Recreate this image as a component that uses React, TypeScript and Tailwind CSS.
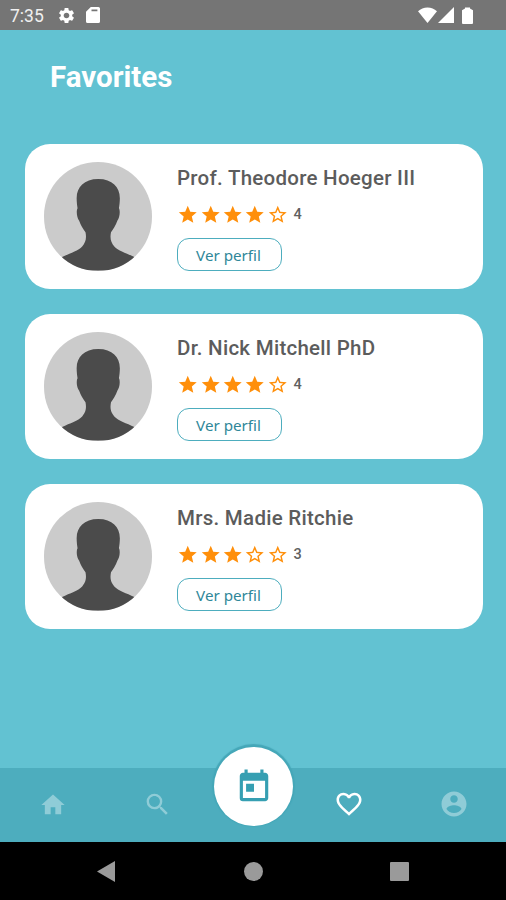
import {
  MdFavoriteBorder,
  MdHome,
  MdSearch,
  MdSettings,
  MdStar,
  MdStarBorder,
  MdToday,
} from "react-icons/md";

const doctors = [
  { name: "Prof. Theodore Hoeger III", stars: 4 },
  { name: "Dr. Nick Mitchell PhD", stars: 4 },
  { name: "Mrs. Madie Ritchie", stars: 3 },
];

function StatusBar() {
  return (
    <div className="flex h-[30px] items-center bg-[#757575] pr-[33px] pl-[10px] text-white">
      <span className="w-[47px] pt-[2px] text-[17.5px] leading-[30px] text-[#f0f0f0]">7:35</span>
      <MdSettings className="size-[19px]" />
      <svg viewBox="0 0 14 16" className="ml-[10px] h-[16px] w-[14px]" fill="currentColor">
        <path fillRule="evenodd" d="M4.8 0H12.4Q14 0 14 1.6V14.4Q14 16 12.4 16H1.6Q0 16 0 14.4V4.8ZM5.5 2.4V4.2H11.4V2.4Z" />
      </svg>
      <div className="ml-auto flex items-center">
        <svg viewBox="0 0 19 16" className="h-[16px] w-[19px]" fill="currentColor">
          <path d="M9.5 16L0 4.2Q4 0.4 9.5 0.4T19 4.2Z" />
        </svg>
        <svg viewBox="0 0 16 16" className="ml-[1px] h-[16px] w-[16px]" fill="currentColor">
          <path d="M0 16L16 0V16Z" />
        </svg>
        <svg viewBox="0 0 11 17" className="ml-[8px] h-[17px] w-[11px]" fill="currentColor">
          <path d="M3 0.5H8V1.6L11 3.2V16Q11 17 10 17H1Q0 17 0 16V3.2L3 1.6Z" />
        </svg>
      </div>
    </div>
  );
}

function Avatar() {
  return (
    <svg viewBox="0 0 108 108" className="size-[108.5px] shrink-0 rounded-full bg-[#cbcbcb]">
      <path
        fill="#4b4b4b"
        d="M54 17C40 17 32.5 25 32.5 36C32.5 40 33 43 33.4 46C32 48.5 32.5 55 35 58.5C36.5 63 39 67 41.3 70C42.5 76 41.5 80 38 84C34 88.5 26 90.5 18 94.5V108H90V94.5C82 90.5 74 88.5 70 84C66.5 80 65.5 76 66.7 70C69 67 71.5 63 73 58.5C75.5 55 76 48.5 74.6 46C75 43 75.5 40 75.5 36C75.5 25 68 17 54 17Z"
      />
    </svg>
  );
}

function Rating({ value }: { value: number }) {
  return (
    <div className="mt-[11px] flex h-[22px] items-center text-[#ff8f0a]">
      {[1, 2, 3, 4, 5].map((n) => (
        <span key={n} className="flex w-[22.3px] justify-center">
          {n <= value ? <MdStar className="size-[21.5px]" /> : <MdStarBorder className="size-[21.5px]" />}
        </span>
      ))}
      <span className="ml-[5px] text-[14.5px] font-medium text-[#606060]">{value}</span>
    </div>
  );
}

function DoctorCard({ doctor }: { doctor: (typeof doctors)[number] }) {
  return (
    <div className="flex h-[145.5px] rounded-[25px] bg-white pt-[18.5px] pl-[18.5px]">
      <Avatar />
      <div className="ml-[25px]">
        <h2 className="mt-px h-[30px] text-[20.5px] leading-[30px] font-medium tracking-[0.27px] whitespace-nowrap text-[#5c5c5c]">
          {doctor.name}
        </h2>
        <Rating value={doctor.stars} />
        <button className="mt-[12px] block h-[33px] w-[105px] rounded-[12px] border border-[#4dadbe] pr-[2px] font-['Noto_Sans',sans-serif] text-[15.2px] leading-[32px] text-[#2f8799]">
          Ver perfil
        </button>
      </div>
    </div>
  );
}

function AccountIcon() {
  return (
    <svg viewBox="0 0 24 24" className="-mt-[2px] ml-[1px] size-[30px]" fill="currentColor">
      <path d="M12 2C6.48 2 2 6.48 2 12s4.48 10 10 10 10-4.48 10-10S17.52 2 12 2zm0 3c1.66 0 3 1.34 3 3s-1.34 3-3 3-3-1.34-3-3 1.34-3 3-3zm0 14.2c-2.5 0-4.71-1.28-6-3.22.03-1.99 4-3.08 6-3.08 1.99 0 5.97 1.09 6 3.08-1.29 1.94-3.5 3.22-6 3.22z" />
    </svg>
  );
}

function TabBar() {
  return (
    <div className="grid h-[74px] grid-cols-[106px_103px_89px_102px_106px] items-center justify-items-center bg-[#4dadbe] text-[#8fccd7]">
      <MdHome className="-mt-[1px] size-[28px]" />
      <MdSearch className="-mt-[2px] size-[29px]" />
      {/* Raised calendar button */}
      <div className="-mt-[37px] flex size-[79px] items-center justify-center rounded-full bg-white text-[#369fb2] shadow-[0_-1px_1px_2px_#45a7b8]">
        <MdToday className="size-[38px]" />
      </div>
      <MdFavoriteBorder className="-mt-[2px] size-[30px] text-white" />
      <AccountIcon />
    </div>
  );
}

function SystemNav() {
  return (
    <div className="flex h-[58px] items-center bg-black pl-[97px] text-[#9a9a9a]">
      <svg viewBox="0 0 18 21" className="h-[21px] w-[18px]" fill="currentColor">
        <path d="M18 0V21L0 10.5Z" />
      </svg>
      <div className="ml-[129px] size-[19px] rounded-full bg-[#9a9a9a]" />
      <div className="ml-[126.5px] size-[19px] rounded-[1px] bg-[#9a9a9a]" />
    </div>
  );
}

export default function App() {
  return (
    <div className="flex h-[900px] w-[506px] flex-col overflow-hidden bg-[#62c2d2] font-[Roboto,sans-serif]">
      <StatusBar />
      <h1 className="mt-[27px] ml-[50px] h-[40px] text-[29.5px] leading-[40px] font-bold text-white">Favorites</h1>
      <div className="mt-[46.5px] mr-[23.5px] ml-[25px] flex flex-1 flex-col gap-[24.6px]">
        {doctors.map((doctor) => (
          <DoctorCard key={doctor.name} doctor={doctor} />
        ))}
      </div>
      <TabBar />
      <SystemNav />
    </div>
  );
}
